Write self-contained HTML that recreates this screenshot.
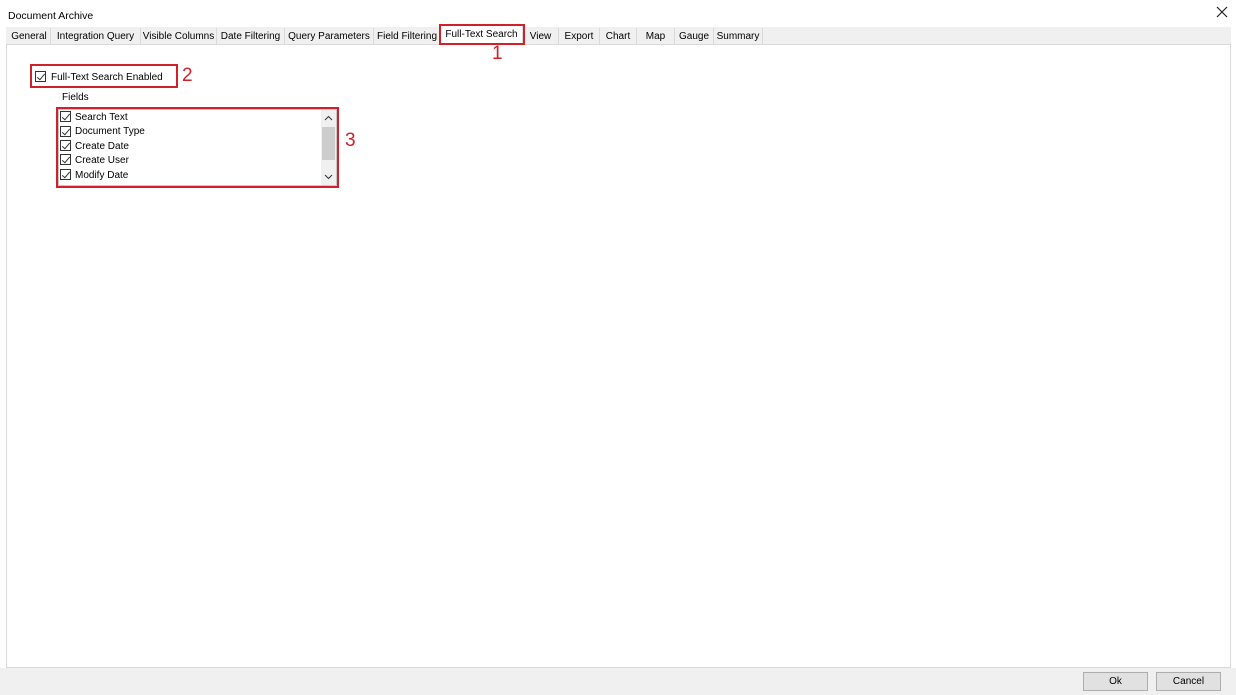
<!DOCTYPE html>
<html><head><style>
*{margin:0;padding:0;box-sizing:border-box}
body{width:1236px;height:695px;background:#fff;font-family:"Liberation Sans",sans-serif;font-size:10px;color:#000;position:relative;overflow:hidden}
.a{position:absolute;white-space:nowrap}
.tab{position:absolute;top:28px;height:16px;border-right:1px solid #d9d9d9;line-height:17px;text-align:center;white-space:nowrap;background:#f0f0f0;overflow:hidden}
.cb{position:absolute;width:11px;height:11px;border:1px solid #333;background:#fff}
.cb:after{content:"";position:absolute;left:3px;top:0px;width:3px;height:7px;border:solid #333;border-width:0 1px 1px 0;transform:rotate(40deg)}
.red{position:absolute;border:2px solid #d0202a}
.num{position:absolute;color:#d0202a;font-size:19px;line-height:19px}
.btn{position:absolute;top:672px;height:19px;background:#e1e1e1;border:1px solid #adadad;text-align:center;line-height:18px}
</style></head><body>
<div class="a" style="left:8px;top:10px;font-size:10.5px">Document Archive</div>
<div class="a" style="left:1216px;top:6px;width:12px;height:12px">
<svg width="12" height="12"><path d="M1 1L11 11M11 1L1 11" stroke="#222" stroke-width="1.2"/></svg></div>
<div class="a" style="left:6px;top:27px;width:1225px;height:17px;background:#f0f0f0"></div>
<div class="a" style="left:6px;top:44px;width:1225px;height:624px;border:1px solid #d9d9d9;background:#fff"></div>
<div class="a" style="left:0;top:668px;width:1236px;height:27px;background:#f0f0f0"></div>
<div class="tab" style="left:8px;width:43px">General</div>
<div class="tab" style="left:51px;width:90px">Integration Query</div>
<div class="tab" style="left:141px;width:76px">Visible Columns</div>
<div class="tab" style="left:217px;width:68px">Date Filtering</div>
<div class="tab" style="left:285px;width:89px">Query Parameters</div>
<div class="tab" style="left:374px;width:67px">Field Filtering</div>
<div class="tab" style="left:441px;width:82px;top:25px;height:20px;background:#fff;line-height:20px">Full-Text Search</div>
<div class="tab" style="left:523px;width:36px">View</div>
<div class="tab" style="left:559px;width:41px">Export</div>
<div class="tab" style="left:600px;width:37px">Chart</div>
<div class="tab" style="left:637px;width:38px">Map</div>
<div class="tab" style="left:675px;width:39px">Gauge</div>
<div class="tab" style="left:714px;width:49px">Summary</div>
<div class="red" style="left:439px;top:24px;width:86px;height:21px"></div>
<div class="num" style="left:492px;top:44px">1</div>
<div class="red" style="left:30px;top:64px;width:148px;height:24px"></div>
<div class="cb" style="left:35px;top:71px"></div>
<div class="a" style="left:51px;top:72px">Full-Text Search Enabled</div>
<div class="num" style="left:182px;top:66px">2</div>
<div class="a" style="left:62px;top:92px">Fields</div>
<div class="red" style="left:56px;top:107px;width:283px;height:81px"></div>
<div class="a" style="left:58px;top:109px;width:279px;height:77px;border:1px solid #c8c8c8;background:#fff"></div>
<div class="a" style="left:321px;top:110px;width:15px;height:75px;background:#f0f0f0"></div>
<div class="a" style="left:322px;top:127px;width:13px;height:33px;background:#cdcdcd"></div>
<div class="a" style="left:324px;top:113px"><svg width="9" height="6"><path d="M1 5L4.5 1.5L8 5" stroke="#333" fill="none"/></svg></div>
<div class="a" style="left:324px;top:172px"><svg width="9" height="6"><path d="M1 1L4.5 4.5L8 1" stroke="#333" fill="none"/></svg></div>
<div class="cb" style="left:60px;top:111px"></div><div class="a" style="left:75px;top:112px">Search Text</div>
<div class="cb" style="left:60px;top:126px"></div><div class="a" style="left:75px;top:126px">Document Type</div>
<div class="cb" style="left:60px;top:140px"></div><div class="a" style="left:75px;top:141px">Create Date</div>
<div class="cb" style="left:60px;top:154px"></div><div class="a" style="left:75px;top:155px">Create User</div>
<div class="cb" style="left:60px;top:169px"></div><div class="a" style="left:75px;top:170px">Modify Date</div>
<div class="num" style="left:345px;top:131px">3</div>
<div class="btn" style="left:1083px;width:65px">Ok</div>
<div class="btn" style="left:1156px;width:65px">Cancel</div>
</body></html>
